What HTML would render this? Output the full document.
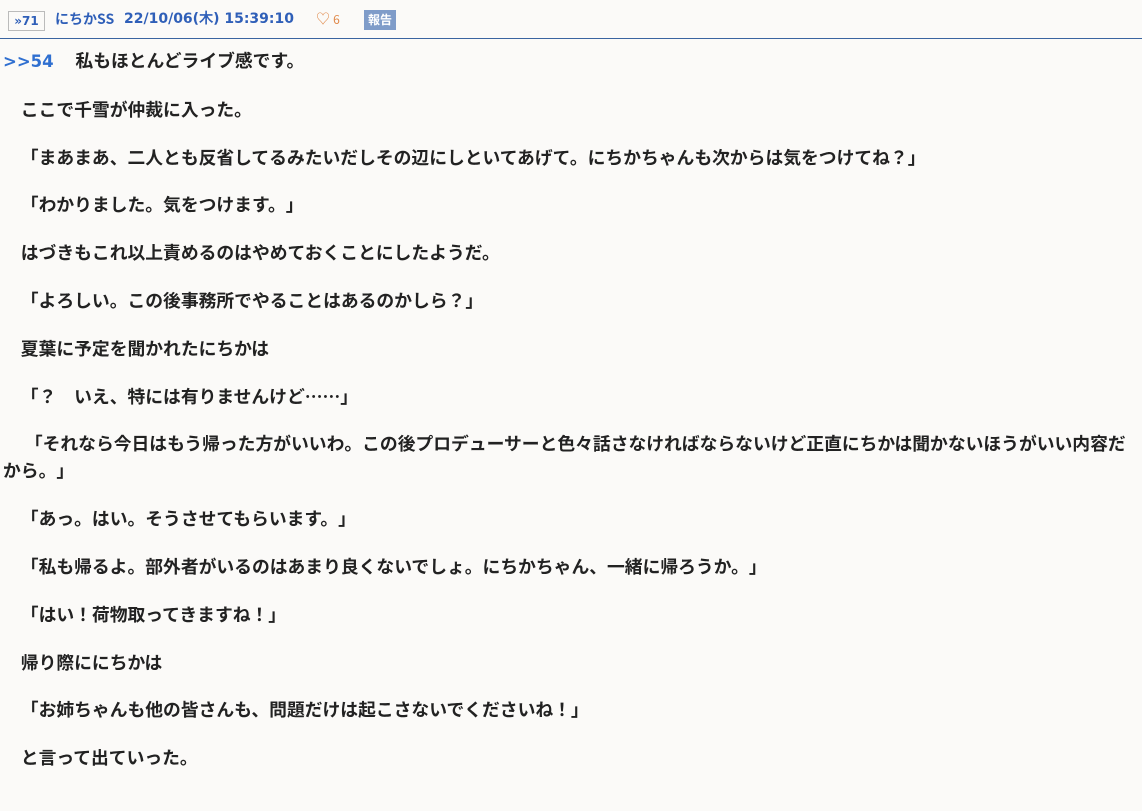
<!DOCTYPE html>
<html><head><meta charset="utf-8"><style>
body{margin:0;background:#fbfaf8;font-family:"Noto Sans CJK JP",sans-serif;width:1142px;height:811px;overflow:hidden}
.hd{height:38px;border-bottom:1px solid #3a64a0;position:relative;font-size:14px;font-weight:bold;color:#2f5fb8}
.hd span{position:absolute;top:9px;white-space:nowrap;line-height:20px}
.num{left:8px;top:11px!important;width:35px;text-align:center;border:1px solid #bbb;font-size:12px;font-weight:bold;color:#2f5fb8;line-height:18px!important;font-family:"DejaVu Sans",sans-serif}
.heart{color:#e0894a;font-weight:normal}
.rep{background:#7f9cc9;color:#fff;padding:0 4px;font-size:12px;top:10px!important}
.c{font-size:17.8px;font-weight:bold;color:#222;padding-left:3px;white-space:nowrap;text-spacing-trim:space-all}
.c p{margin:0 0 20.8px;line-height:27px}
.a{color:#2f6fd0;font-family:"DejaVu Sans",sans-serif;font-size:16.5px;margin-right:4px}
</style></head><body>
<div class="hd">
<span class="num">»71</span>
<span style="left:55px">にちかSS</span>
<span style="left:124px;font-family:'DejaVu Sans',sans-serif;font-size:14px;top:9px">22/10/06(木) 15:39:10</span>
<span class="heart" style="left:316px">♡ <span style="position:static;font-size:12px">6</span></span>
<span class="rep" style="left:364px">報告</span>
</div>
<div class="c" style="margin-top:8px">
<p><span class="a">&gt;&gt;54</span>　私もほとんどライブ感です。</p>
<p>　ここで千雪が仲裁に入った。</p>
<p>　「まあまあ、二人とも反省してるみたいだしその辺にしといてあげて。にちかちゃんも次からは気をつけてね？」</p>
<p>　「わかりました。気をつけます。」</p>
<p>　はづきもこれ以上責めるのはやめておくことにしたようだ。</p>
<p>　「よろしい。この後事務所でやることはあるのかしら？」</p>
<p>　夏葉に予定を聞かれたにちかは</p>
<p>　「？　いえ、特には有りませんけど……」</p>
<p>　 「それなら今日はもう帰った方がいいわ。この後プロデューサーと色々話さなければならないけど正直にちかは聞かないほうがいい内容だ<br>から。」</p>
<p>　「あっ。はい。そうさせてもらいます。」</p>
<p>　「私も帰るよ。部外者がいるのはあまり良くないでしょ。にちかちゃん、一緒に帰ろうか。」</p>
<p>　「はい！荷物取ってきますね！」</p>
<p>　帰り際ににちかは</p>
<p>　「お姉ちゃんも他の皆さんも、問題だけは起こさないでくださいね！」</p>
<p>　と言って出ていった。</p>
</div>
</body></html>
